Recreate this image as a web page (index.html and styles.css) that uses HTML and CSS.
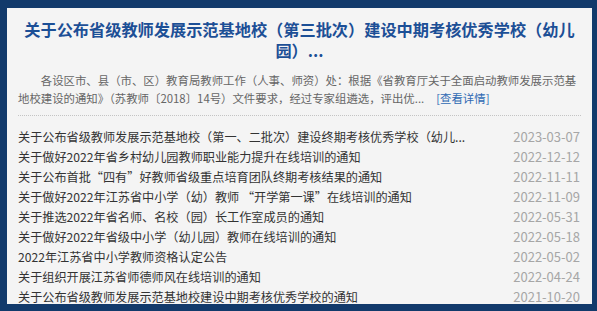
FILE: index.html
```html
<!DOCTYPE html>
<html>
  <head>
    <meta charset="utf-8" />
    <meta name="viewport" content="width=device-width, initial-scale=1.0" />
    <link rel="stylesheet" href="styles.css">
  </head>

  <body>
    <div id="wrap">
      <div class="headline">
        <h1>关于公布省级教师发展示范基地校（第三批次）建设中期考核优秀学校（幼儿园）...</h1>
        <p class="summary"><span>各设区市、县（市、区）教育局教师工作（人事、师资）处：根据《省教育厅关于全面启动教师发展示范基地校建设的通知》（苏教师〔2018〕14号）文件要求，经过专家组遴选，评出优...</span><a href="#" class="more">[查看详情]</a></p>
      </div>
      <ul class="newsList">
        <li><a href="#">关于公布省级教师发展示范基地校（第一、二批次）建设终期考核优秀学校（幼儿...</a><span class="date">2023-03-07</span></li>
        <li><a href="#">关于做好2022年省乡村幼儿园教师职业能力提升在线培训的通知</a><span class="date">2022-12-12</span></li>
        <li><a href="#">关于公布首批“四有”好教师省级重点培育团队终期考核结果的通知</a><span class="date">2022-11-11</span></li>
        <li><a href="#">关于做好2022年江苏省中小学（幼）教师 “开学第一课”在线培训的通知</a><span class="date">2022-11-09</span></li>
        <li><a href="#">关于推选2022年省名师、名校（园）长工作室成员的通知</a><span class="date">2022-05-31</span></li>
        <li><a href="#">关于做好2022年省级中小学（幼儿园）教师在线培训的通知</a><span class="date">2022-05-18</span></li>
        <li><a href="#">2022年江苏省中小学教师资格认定公告</a><span class="date">2022-05-02</span></li>
        <li><a href="#">关于组织开展江苏省师德师风在线培训的通知</a><span class="date">2022-04-24</span></li>
        <li><a href="#">关于公布省级教师发展示范基地校建设中期考核优秀学校的通知</a><span class="date">2021-10-20</span></li>
      </ul>
    </div>
  </body>
</html>
```

FILE: styles.css
```css
html {
  font-family: "Noto Sans CJK SC", "Noto Sans", sans-serif;
}

body {
  margin: 0;
  width: 597px;
  height: 311px;
  background-color: #123a6b;
  box-sizing: border-box;
  padding: 8px 5px 7px 7px;
}

#wrap {
  height: 100%;
  background-color: #f4f4f4;
  padding: 0 11px;
  box-sizing: border-box;
  overflow: hidden;
}

a {
  text-decoration: none;
  color: inherit;
}

.headline {
  padding: 11px 0 8px;
  border-bottom: 1px dotted #c4c4c4;
}

h1 {
  margin: 0;
  font-size: 16.2px;
  line-height: 21px;
  font-weight: 700;
  color: #1c4f96;
  text-align: center;
}

.summary {
  margin: 10px 0 0;
  font-size: 11.4px;
  line-height: 18px;
  color: #666;
  text-indent: 2em;
}

.summary .more {
  display: inline-block;
  text-indent: 0;
  margin-left: 12px;
  color: #2f6ab3;
}

.newsList {
  list-style: none;
  margin: 0;
  padding: 10px 0 0;
}

.newsList li {
  display: flex;
  justify-content: space-between;
  align-items: center;
  height: 20px;
  font-size: 12.15px;
  color: #333;
}

.newsList a {
  white-space: nowrap;
}

.date {
  color: #a6a6a6;
  font-size: 13px;
  margin-right: 1px;
}
```
